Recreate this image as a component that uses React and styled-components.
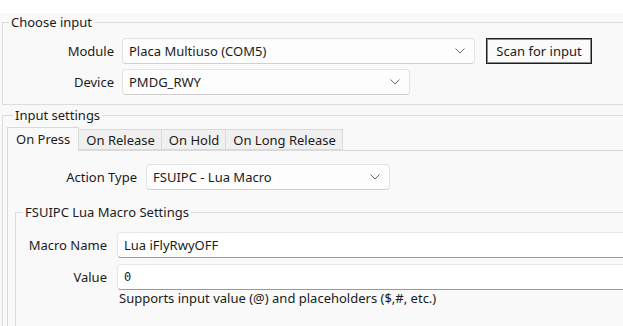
import styled, { createGlobalStyle } from 'styled-components';

const GlobalStyle = createGlobalStyle`
    html, body {
        margin: 0;
        padding: 0;
        background: #f9f9f9;
    }
    body {
        font-family: "Noto Sans", "Open Sans", sans-serif;
        font-size: 13px;
        color: #1b1b1b;
    }
`;

const Window = styled.div`
    width: 623px;
    height: 326px;
    overflow: hidden;
    background: #f9f9f9;
`;

const TopStrip = styled.div`
    height: 13px;
    background: #ffffff;
`;

const Group = styled.fieldset`
    margin: ${({ $top }) => $top}px -30px 0 ${({ $left }) => $left}px;
    padding: ${({ $pad }) => $pad};
    border: 1px solid #dcdcdc;
    min-width: 0;
`;

const Legend = styled.legend`
    margin-left: ${({ $offset }) => $offset}px;
    padding: 0 2px;
    line-height: 16px;
    height: 16px;
    color: #1b1b1b;
`;

const FormGrid = styled.div`
    display: grid;
    grid-template-columns: ${({ $label }) => $label}px 1fr;
    column-gap: ${({ $gap }) => $gap}px;
    row-gap: ${({ $row }) => $row || 5}px;
    align-items: center;
`;

const Label = styled.label`
    text-align: right;
    white-space: nowrap;
`;

const InlineRow = styled.div`
    display: flex;
    align-items: center;
    gap: 11px;
`;

const Combo = styled.div`
    box-sizing: border-box;
    width: ${({ $w }) => $w}px;
    height: 26px;
    display: flex;
    align-items: center;
    justify-content: space-between;
    padding: 0 9px 0 6px;
    background: #fdfdfd;
    border: 1px solid #e3e3e3;
    border-bottom-color: #cfcfcf;
    border-radius: 4px;
    white-space: nowrap;
`;

const Chevron = () => (
    <svg width="10" height="6" viewBox="0 0 10 6">
        <polyline points="0.5,0.5 5,5 9.5,0.5" fill="none" stroke="#6a6a6a" strokeWidth="1" />
    </svg>
);

const Button = styled.button`
    box-sizing: border-box;
    width: 106px;
    height: 26px;
    padding: 0;
    font: inherit;
    color: #1b1b1b;
    background: #fbfbfb;
    border: 1px solid #1f1f1f;
    box-shadow: inset 0 0 0 1px #8a8a8a;
    border-radius: 0;
`;

const Tabs = styled.div`
    display: flex;
    align-items: flex-end;
    height: 23px;
    margin-top: 4px;
    position: relative;
    z-index: 1;
`;

const Tab = styled.div`
    box-sizing: border-box;
    height: ${({ $active }) => ($active ? 24 : 21)}px;
    padding: ${({ $active }) => ($active ? '2px 8px 0 8px' : '1px 6px 0 7px')};
    margin-bottom: ${({ $active }) => ($active ? -1 : 0)}px;
    background: ${({ $active }) => ($active ? '#f9f9f9' : '#f0f0f0')};
    border: 1px solid #dadada;
    border-bottom: ${({ $active }) => ($active ? 'none' : '1px solid #dadada')};
    margin-left: ${({ $first }) => ($first ? 0 : -1)}px;
    line-height: 18px;
    white-space: nowrap;
`;

const TabPanel = styled.div`
    border: 1px solid #dadada;
    margin-right: -30px;
    padding: 13px 0 40px 0;
    background: #f9f9f9;
`;

const TextBox = styled.div`
    box-sizing: border-box;
    height: 26px;
    display: flex;
    align-items: center;
    padding: 0 6px;
    background: #ffffff;
    border: 1px solid #e8e8e8;
    border-bottom: 1px solid #9a9a9a;
    border-radius: 4px 0 0 4px;
    margin-right: -30px;
    font-family: ${({ $mono }) => ($mono ? '"DejaVu Sans Mono", "Liberation Mono", monospace' : 'inherit')};
    font-size: ${({ $mono }) => ($mono ? '12px' : 'inherit')};
    white-space: nowrap;
`;

const Hint = styled.div`
    grid-column: 2;
    margin-top: -7px;
    padding-left: 2px;
    white-space: nowrap;
`;

const tabs = ['On Press', 'On Release', 'On Hold', 'On Long Release'];

export default function App() {
    return (
        <Window>
            <GlobalStyle />
            <TopStrip />
            <Group $top={1} $left={2} $pad="8px 0 9px 0">
                <Legend $offset={6}>Choose input</Legend>
                <FormGrid $label={111} $gap={8}>
                    <Label>Module</Label>
                    <InlineRow>
                        <Combo $w={353}>
                            <span>Placa Multiuso (COM5)</span>
                            <Chevron />
                        </Combo>
                        <Button>Scan for input</Button>
                    </InlineRow>
                    <Label>Device</Label>
                    <Combo $w={288}>
                        <span>PMDG_RWY</span>
                        <Chevron />
                    </Combo>
                </FormGrid>
            </Group>
            <Group $top={2} $left={2} $pad="0 0 0 4px">
                <Legend $offset={6}>Input settings</Legend>
                <Tabs>
                    {tabs.map((t, i) => (
                        <Tab key={t} $active={i === 0} $first={i === 0}>{t}</Tab>
                    ))}
                </Tabs>
                <TabPanel>
                    <FormGrid $label={129} $gap={9}>
                        <Label>Action Type</Label>
                        <Combo $w={244}>
                            <span>FSUIPC - Lua Macro</span>
                            <Chevron />
                        </Combo>
                    </FormGrid>
                    <Group $top={14} $left={7} $pad="12px 0 20px 0">
                        <Legend $offset={7}>FSUIPC Lua Macro Settings</Legend>
                        <FormGrid $label={91} $gap={10} $row={6}>
                            <Label>Macro Name</Label>
                            <TextBox>Lua iFlyRwyOFF</TextBox>
                            <Label>Value</Label>
                            <TextBox $mono>0</TextBox>
                            <Hint>Supports input value (@) and placeholders ($,#, etc.)</Hint>
                        </FormGrid>
                    </Group>
                </TabPanel>
            </Group>
        </Window>
    );
}
